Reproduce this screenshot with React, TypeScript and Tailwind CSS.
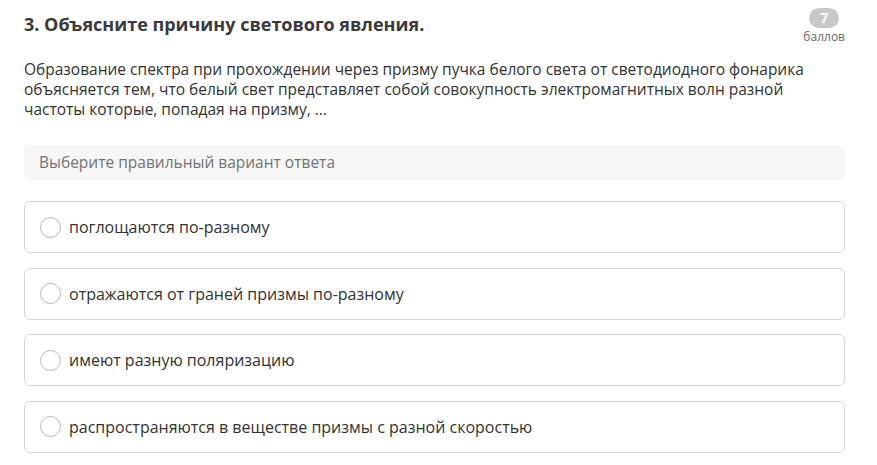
import React from "react";

const options = [
  "поглощаются по-разному",
  "отражаются от граней призмы по-разному",
  "имеют разную поляризацию",
  "распространяются в веществе призмы с разной скоростью",
];

export default function App() {
  return (
    <div className="min-h-screen bg-white pl-6 pr-8 pt-2 font-['Open_Sans',sans-serif] text-[#333]">
      <div className="flex items-start justify-between">
        <h1 className="mt-[3px] text-[18px] font-bold leading-[26px] text-[#3a3a3a]">
          3. Объясните причину светового явления.
        </h1>
        <div className="flex flex-col items-center">
          <span className="flex h-[20px] min-w-[30px] items-center justify-center rounded-full bg-[#c8c8c8] text-[14px] font-bold leading-none text-white">
            7
          </span>
          <span className="mt-[1px] text-[12px] leading-[16px] text-[#666]">баллов</span>
        </div>
      </div>

      <p className="mt-[14px] text-[15.5px] leading-[20px]">
        Образование спектра при прохождении через призму пучка белого света от светодиодного фонарика
        объясняется тем, что белый свет представляет собой совокупность электромагнитных волн разной
        частоты которые, попадая на призму, ...
      </p>

      <div className="mt-[26px] flex h-[35px] items-center rounded-md bg-[#f6f6f6] px-[15px] text-[15.5px] text-[#737373]">
        Выберите правильный вариант ответа
      </div>

      <div className="mt-[21px] flex flex-col gap-[14.5px]">
        {options.map((o) => (
          <label
            key={o}
            className="flex h-[52px] cursor-pointer items-center gap-[8px] rounded-md border border-[#d6d6d6] px-[15px] text-[16px]"
          >
            <span className="h-[21px] w-[21px] shrink-0 rounded-full border border-[#b5b5b5] bg-white" />
            <span>{o}</span>
          </label>
        ))}
      </div>
    </div>
  );
}
